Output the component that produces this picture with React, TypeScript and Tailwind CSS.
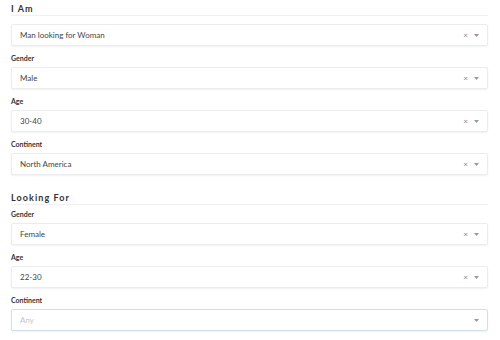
import React from 'react';

type Field = { label?: string; value: string; placeholder?: boolean; focused?: boolean };

const Select = ({ value, placeholder, focused }: Field) => (
  <div
    className={`flex h-[22px] items-center justify-between rounded-[2px] border bg-white pl-[8px] pr-[8px] shadow-[0_1px_2px_rgba(0,0,0,0.06)] ${
      focused ? 'border-[#cfe0ec]' : 'border-[#ececec]'
    }`}
  >
    <span className={`text-[8px] leading-[10px] ${placeholder ? 'text-[#c4c4c4]' : 'text-[#444]'}`}>{value}</span>
    <span className="flex items-center gap-[6px] text-[#888]">
      {!placeholder && <span className="text-[8px] leading-none">×</span>}
      <svg width="5" height="3" viewBox="0 0 5 3">
        <path d="M0 0h5L2.5 3z" fill="#999" />
      </svg>
    </span>
  </div>
);

const Section = ({ title, fields }: { title: string; fields: Field[] }) => (
  <div>
    <div className="h-[13px] border-b border-[#f0f0f0] text-[9px] leading-[12px] font-bold tracking-[0.12em] text-[#333]">
      {title}
    </div>
    <div className={`flex flex-col gap-[7px] ${fields[0].label ? 'mt-[4px]' : 'mt-[8px]'}`}>
      {fields.map((f, i) => (
        <div key={i}>
          {f.label && <div className="mb-[4px] h-[10px] text-[7px] leading-[10px] font-bold text-[#333]">{f.label}</div>}
          <Select {...f} />
        </div>
      ))}
    </div>
  </div>
);

export default function App() {
  return (
    <div
      className="h-[340px] w-[500px] overflow-hidden bg-white pl-[11px] pr-[12px] pt-[3px]"
      style={{ fontFamily: 'Lato, "Open Sans", sans-serif' }}
    >
      <Section
        title="I Am"
        fields={[
          { value: 'Man looking for Woman' },
          { label: 'Gender', value: 'Male' },
          { label: 'Age', value: '30-40' },
          { label: 'Continent', value: 'North America' },
        ]}
      />
      <div className="mt-[17px]">
        <Section
          title="Looking For"
          fields={[
            { label: 'Gender', value: 'Female' },
            { label: 'Age', value: '22-30' },
            { label: 'Continent', value: 'Any', placeholder: true, focused: true },
          ]}
        />
      </div>
    </div>
  );
}
